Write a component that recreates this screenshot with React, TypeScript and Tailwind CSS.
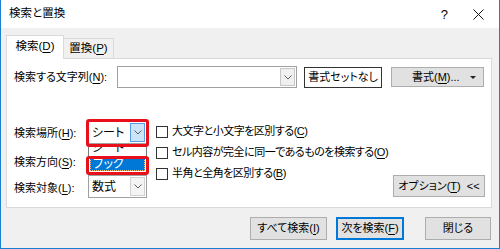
import React from 'react';

const font = "font-['Liberation_Sans','Noto_Sans_CJK_JP',sans-serif] [font-feature-settings:'palt']";

const Chevron = ({ color = '#606060' }: { color?: string }) => (
  <svg width="8" height="5" viewBox="0 0 8 5">
    <polyline points="0.5,0.5 4,4 7.5,0.5" fill="none" stroke={color} strokeWidth="1" />
  </svg>
);

const Key = ({ k }: { k: string }) => <span className="underline underline-offset-2">{k}</span>;

const Combo = ({ value, open = false }: { value: string; open?: boolean }) => (
  <div className="flex h-[23px] w-[59px] border border-[#a0a0a0] bg-white">
    <div className="flex flex-1 items-center pl-[3px] text-[12px]">{value}</div>
    <div
      className={
        open
          ? 'm-px flex w-[15px] items-center justify-center border border-[#569de5] bg-[#cce4f7]'
          : 'm-px flex w-[15px] items-center justify-center border border-[#d0d0d0] bg-[#f4f4f4]'
      }
    >
      <Chevron />
    </div>
  </div>
);

const Check = ({ children }: { children: React.ReactNode }) => (
  <div className="flex h-[21px] items-center gap-[3px]">
    <div className="h-[12px] w-[12px] shrink-0 border border-[#333] bg-white" />
    <span className="pl-[1px] tracking-[-0.5px]">{children}</span>
  </div>
);

const Btn = ({ children, className = '' }: { children: React.ReactNode; className?: string }) => (
  <div className={`flex shrink-0 items-center justify-center border border-[#adadad] bg-[#e1e1e1] ${className}`}>
    {children}
  </div>
);

export default function App() {
  return (
    <div className={`flex h-[249px] w-[500px] flex-col whitespace-nowrap border-x border-b border-[#1a7fd5] bg-[#f0f0f0] text-[11px] leading-none text-black ${font}`}>
      {/* title bar */}
      <div className="flex h-[28px] items-center bg-white pl-[8px]">
        <span className="text-[11.5px]">検索と置換</span>
        <span className="ml-auto mr-[25px] text-[13px]">?</span>
        <svg width="11" height="11" viewBox="0 0 11 11" className="mr-[15px]">
          <path d="M0.5 0.5 L10.5 10.5 M10.5 0.5 L0.5 10.5" stroke="#111" strokeWidth="1" />
        </svg>
      </div>

      <div className="flex flex-1 flex-col pl-[5px] pr-[7px] pt-[7px]">
        {/* tabs */}
        <div className="relative z-10 -mb-px flex h-[24px] items-end">
          <div className="flex h-[24px] w-[58px] items-center justify-center border border-b-0 border-[#d9d9d9] bg-white pb-[1px] text-[11.5px]">
            検索(<Key k="D" />)
          </div>
          <div className="flex h-[21px] w-[50px] items-center justify-center border border-l-0 border-[#d9d9d9] bg-[#f0f0f0] text-[11.5px]">
            置換(<Key k="P" />)
          </div>
        </div>

        {/* panel */}
        <div className="flex h-[150px] flex-col border border-[#d9d9d9] bg-white pb-[9px] pl-[7px] pr-[6px] pt-[7px]">
          <div className="flex h-[22px] items-center">
            <div className="w-[103px] shrink-0">
              検索する文字列(<Key k="N" />):
            </div>
            <div className="flex h-[22px] w-[180px] shrink-0 border border-[#a0a0a0] bg-white">
              <div className="flex-1" />
              <div className="m-px flex w-[15px] items-center justify-center border border-[#c8c8c8] bg-[#f0f0f0]">
                <Chevron />
              </div>
            </div>
            <div className="ml-[7px] flex h-[21px] w-[78px] shrink-0 items-center justify-center border border-[#333] bg-white">
              書式セットなし
            </div>
            <Btn className="ml-[9px] h-[20px] w-[93px]">
              <span className="ml-[20px]">書式(<Key k="M" />)...</span>
              <svg width="6" height="3" viewBox="0 0 6 3" className="ml-auto mr-[7px]">
                <path d="M0 0 L6 0 L3 3 Z" fill="#222" />
              </svg>
            </Btn>
          </div>

          <div className="mt-[33px] flex flex-1">
            <div className="relative grid shrink-0 grid-cols-[74px_59px] grid-rows-[23px_23px_23px] gap-y-[4px]">
              <div className="flex items-center pt-[2px]">検索場所(<Key k="H" />):</div>
              <Combo value="シート" open />
              <div className="flex items-center pt-[6px]">検索方向(<Key k="S" />):</div>
              <Combo value="" />
              <div className="flex items-center pt-[4px]">検索対象(<Key k="L" />):</div>
              <Combo value="数式" />

              {/* open list */}
              <div className="absolute left-[74px] top-[24px] flex h-[29px] w-[59px] flex-col overflow-hidden border-x border-b border-[#7a7a7a] bg-white text-[12px]">
                <div className="h-[12px] overflow-hidden pl-[3px]">
                  <div className="-mt-[4px] leading-[14px]">シート</div>
                </div>
                <div className="mx-px flex h-[14px] items-center border border-dotted border-[#f5c27a] bg-[#0078d7] pl-[2px] text-white">
                  ブック
                </div>
              </div>

              {/* highlights */}
              <div className="absolute left-[72px] top-[-2px] h-[28px] w-[63px] rounded-[3px] border-[3px] border-[#e8111b]" />
              <div className="absolute left-[72px] top-[35px] h-[19px] w-[63px] rounded-[3px] border-[3px] border-[#e8111b]" />
            </div>

            <div className="ml-[9px] flex shrink-0 flex-col">
              <Check>
                大文字と小文字を区別する(<Key k="C" />)
              </Check>
              <Check>
                セル内容が完全に同一であるものを検索する(<Key k="O" />)
              </Check>
              <Check>
                半角と全角を区別する(<Key k="B" />)
              </Check>
            </div>

            <Btn className="mb-px ml-auto h-[22px] w-[92px] self-end">
              オプション(<Key k="T" />)&nbsp;&nbsp;&lt;&lt;
            </Btn>
          </div>
        </div>

        {/* bottom buttons */}
        <div className="mt-[9px] flex h-[23px]">
          <Btn className="ml-[244px] w-[77px]">
            すべて検索(<Key k="I" />)
          </Btn>
          <div className="ml-[9px] flex w-[68px] shrink-0 items-center justify-center border-2 border-[#0078d7] bg-[#e1e1e1]">
            次を検索(<Key k="F" />)
          </div>
          <Btn className="ml-[21px] w-[66px]">閉じる</Btn>
        </div>
      </div>
    </div>
  );
}
